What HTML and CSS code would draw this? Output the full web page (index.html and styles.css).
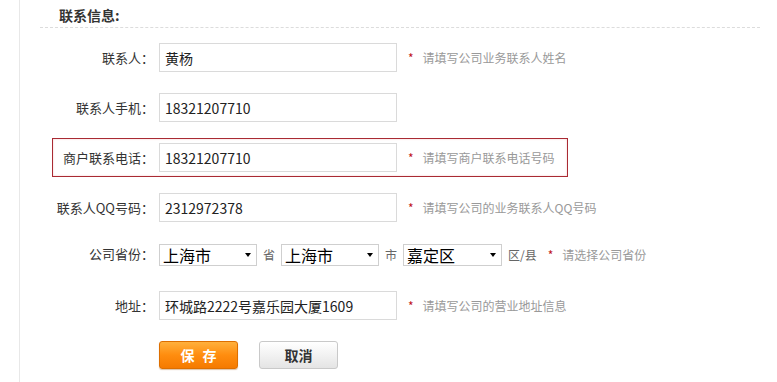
FILE: index.html
```html
<!DOCTYPE html>
<html lang="zh-CN">
<head>
    <meta charset="UTF-8">
    <title>联系信息</title>
    <link rel="stylesheet" href="styles.css">
</head>
<body>
    <div class="page">
        <h3 class="section-title">联系信息:</h3>

        <form class="contact-form">
            <div class="row">
                <label class="label">联系人：</label>
                <input class="text-input" type="text" value="黄杨">
                <span class="hint"><i class="star">*</i>请填写公司业务联系人姓名</span>
            </div>

            <div class="row">
                <label class="label">联系人手机：</label>
                <input class="text-input" type="text" value="18321207710">
            </div>

            <div class="row is-error">
                <label class="label">商户联系电话：</label>
                <input class="text-input" type="text" value="18321207710">
                <span class="hint"><i class="star">*</i>请填写商户联系电话号码</span>
            </div>

            <div class="row">
                <label class="label">联系人QQ号码：</label>
                <input class="text-input" type="text" value="2312972378">
                <span class="hint"><i class="star">*</i>请填写公司的业务联系人QQ号码</span>
            </div>

            <div class="row row-area">
                <label class="label">公司省份：</label>
                <span class="select-wrap">
                    <select class="select"><option>上海市</option></select>
                </span>
                <span class="unit">省</span>
                <span class="select-wrap">
                    <select class="select"><option>上海市</option></select>
                </span>
                <span class="unit">市</span>
                <span class="select-wrap wide">
                    <select class="select"><option>嘉定区</option></select>
                </span>
                <span class="unit">区/县</span>
                <span class="hint hint-far"><i class="star">*</i>请选择公司省份</span>
            </div>

            <div class="row">
                <label class="label">地址：</label>
                <input class="text-input" type="text" value="环城路2222号嘉乐园大厦1609">
                <span class="hint"><i class="star">*</i>请填写公司的营业地址信息</span>
            </div>

            <div class="actions">
                <button type="button" class="btn btn-save">保存</button>
                <button type="button" class="btn btn-cancel">取消</button>
            </div>
        </form>
    </div>
</body>
</html>
```

FILE: styles.css
```css
* {
    box-sizing: border-box;
    font-family: "Noto Sans CJK SC", sans-serif;
}

body {
    margin: 0;
    background: #fff;
    color: #333;
}

.page {
    margin-left: 19px;
    min-height: 382px;
    border-left: 1px solid #e8e8e8;
}

.section-title {
    margin: 0 0 0 20px;
    width: 720px;
    padding: 7px 0 4px 19px;
    font-size: 14px;
    line-height: 16px;
    font-weight: bold;
    color: #333;
    border-bottom: 1px dashed #dcdcdc;
}

.contact-form {
    padding-top: 10px;
}

.row {
    display: flex;
    align-items: center;
    width: 516px;
    margin: 0 0 11px 32px;
    padding: 4px 0;
    border: 1px solid transparent;
}

.row.is-error {
    border-color: #a92a33;
    box-shadow: inset 0 0 2px #f3c6c6;
}

.row-area {
    width: 660px;
    margin-bottom: 16px;
}

.label {
    flex: none;
    width: 101px;
    margin-right: 5px;
    text-align: right;
    font-size: 13px;
    line-height: 16px;
    color: #333;
    white-space: nowrap;
}

.text-input {
    flex: none;
    width: 238px;
    height: 29px;
    padding: 0 5px;
    border: 1px solid #dadada;
    font-size: 14px;
    color: #222;
    outline: none;
}

.hint {
    margin-left: 11px;
    font-size: 12px;
    color: #999;
    white-space: nowrap;
}

.hint-far {
    margin-left: 5px;
}

.star {
    font-style: normal;
    color: #c0141c;
    margin-right: 9px;
}

.select-wrap {
    position: relative;
    flex: none;
    width: 98px;
    height: 22px;
}

.select-wrap.wide {
    width: 99px;
}

.select-wrap::after {
    content: "";
    position: absolute;
    right: 6px;
    top: 10px;
    border-left: 3px solid transparent;
    border-right: 3px solid transparent;
    border-top: 4px solid #000;
    pointer-events: none;
}

.select {
    appearance: none;
    -webkit-appearance: none;
    width: 100%;
    height: 22px;
    margin: 0;
    padding: 0 0 0 3px;
    border: 1px solid #cfcfcf;
    border-radius: 0;
    background: #fff;
    font-size: 16px;
    line-height: 20px;
    color: #000;
}

.unit {
    flex: none;
    margin: 0 6px;
    font-size: 12px;
    color: #666;
    white-space: nowrap;
}

.actions {
    display: flex;
    gap: 21px;
    padding: 5px 0 0 139px;
}

.btn {
    width: 79px;
    height: 28px;
    border-radius: 3px;
    font-size: 14px;
    font-weight: bold;
    cursor: pointer;
}

.btn-save {
    color: #fff;
    letter-spacing: 8px;
    padding-left: 14px;
    border: 1px solid #dd6f00;
    background: linear-gradient(#ffb03c, #ff8d0f 50%, #f57a00);
    box-shadow: 0 1px 1px rgba(160, 80, 0, 0.35);
}

.btn-cancel {
    color: #333;
    border: 1px solid #c9c9c9;
    background: linear-gradient(#ffffff, #f2f2f2 50%, #e4e4e4);
}
```
